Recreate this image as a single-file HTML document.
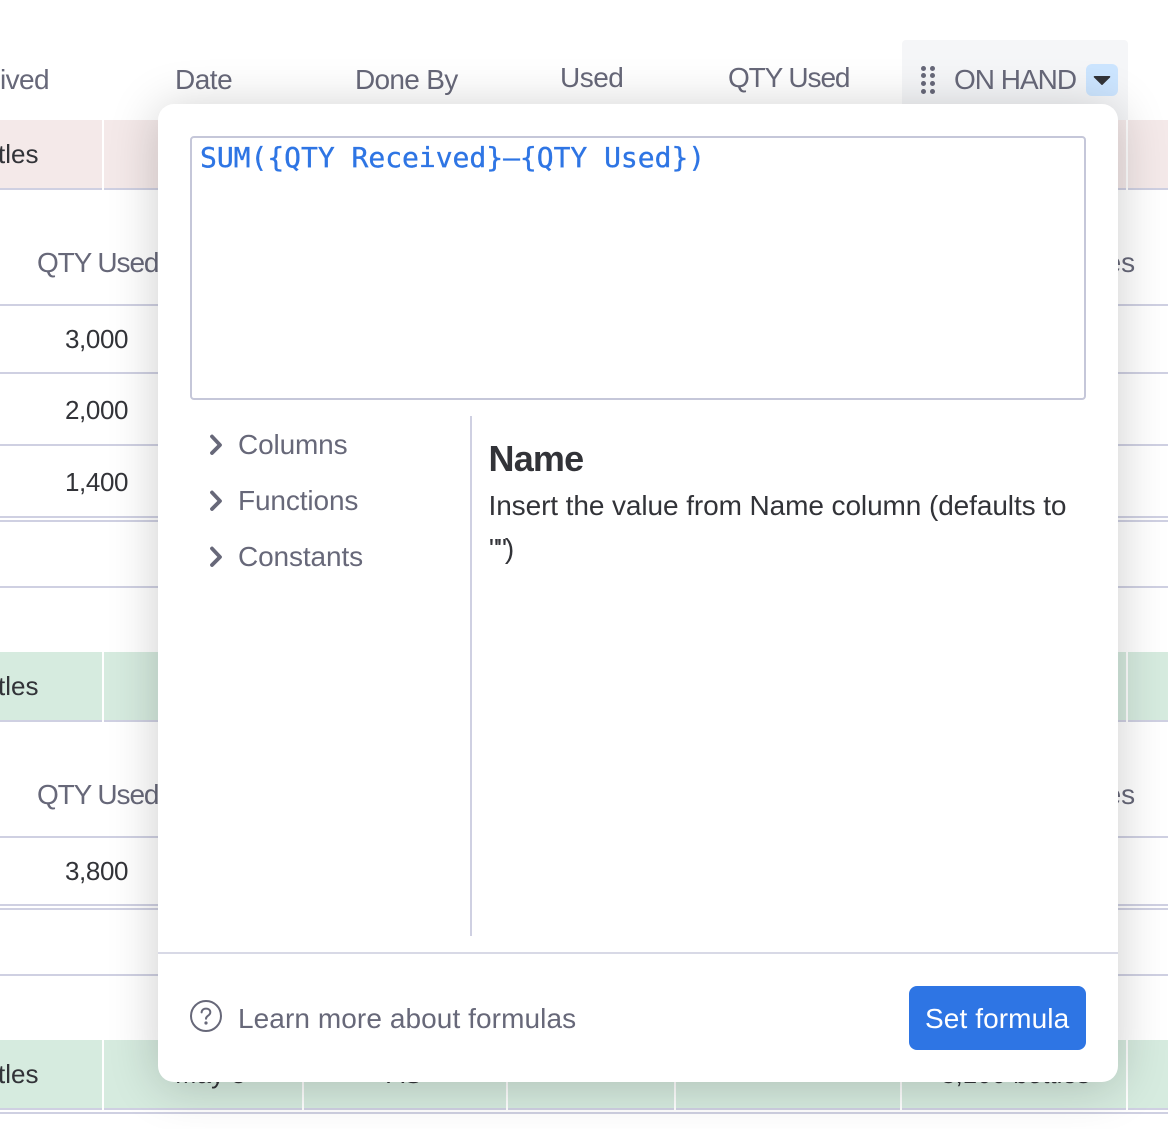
<!DOCTYPE html>
<html><head><meta charset="utf-8">
<style>
html,body{margin:0;padding:0;background:#fff}
#p{position:relative;width:1168px;height:1129px;overflow:hidden;background:#fff;font-family:"Liberation Sans",sans-serif;font-size:28px;color:#676879}
#p div,#p span.t{position:absolute}
.t{white-space:nowrap;line-height:36px;height:36px}
.l{left:0;width:1168px;height:2px;background:#cfd0e2}
.v{width:2px;background:#fff}
.d{color:#323338;font-size:26px}
.n{letter-spacing:-.4px}
.dot{width:5px;height:5px;border-radius:50%;background:#676879}
</style></head><body>
<div id="p">
<span class="t" style="left:0;top:61.5px;letter-spacing:-.6px">ived</span>
<span class="t" style="left:175px;top:61.5px;letter-spacing:-.5px">Date</span>
<span class="t" style="left:355px;top:61.5px;letter-spacing:-.7px">Done By</span>
<span class="t" style="left:560px;top:59.5px;letter-spacing:-.5px">Used</span>
<span class="t" style="left:728px;top:59.5px;letter-spacing:-1.1px">QTY Used</span>
<div style="left:902px;top:40px;width:226px;height:80px;background:#f5f6f8;border-radius:4px 4px 0 0"></div>
<div class="dot" style="left:921px;top:66px"></div><div class="dot" style="left:930px;top:66px"></div>
<div class="dot" style="left:921px;top:73px"></div><div class="dot" style="left:930px;top:73px"></div>
<div class="dot" style="left:921px;top:81px"></div><div class="dot" style="left:930px;top:81px"></div>
<div class="dot" style="left:921px;top:89px"></div><div class="dot" style="left:930px;top:89px"></div>
<span class="t" style="left:954px;top:61.5px;letter-spacing:-1px">ON HAND</span>
<div style="left:1086px;top:64px;width:32px;height:32px;border-radius:6px;background:#cce5ff"></div>
<svg style="position:absolute;left:1093px;top:75px" width="19" height="11" viewBox="0 0 19 11"><path d="M1.5 1.8H16.5L9 9.2Z" fill="#323338" stroke="#323338" stroke-width="1.6" stroke-linejoin="round"/></svg>

<div style="left:0;top:120px;width:1168px;height:68px;background:#f4e9e9"></div>
<div class="l" style="top:188px"></div>
<div class="v" style="left:102px;top:120px;height:70px"></div>
<div class="v" style="left:1126px;top:120px;height:70px"></div>
<span class="t d" style="left:-41px;top:136px">Bottles</span>

<span class="t" style="left:37px;top:245px;letter-spacing:-1.1px">QTY Used</span>
<span class="t" style="left:1062px;top:245px">Notes</span>
<div class="l" style="top:304px"></div>
<span class="t d n" style="left:65px;top:321px">3,000</span>
<div class="l" style="top:372px"></div>
<span class="t d n" style="left:65px;top:392px">2,000</span>
<div class="l" style="top:444px"></div>
<span class="t d n" style="left:65px;top:464px">1,400</span>
<div class="l" style="top:516px"></div>
<div class="l" style="top:520px"></div>
<div class="l" style="top:586px"></div>

<div style="left:0;top:652px;width:1168px;height:68px;background:#d6ebdf"></div>
<div class="l" style="top:720px"></div>
<div class="v" style="left:102px;top:652px;height:70px"></div>
<div class="v" style="left:1126px;top:652px;height:70px"></div>
<span class="t d" style="left:-41px;top:668px">Bottles</span>

<span class="t" style="left:37px;top:777px;letter-spacing:-1.1px">QTY Used</span>
<span class="t" style="left:1062px;top:777px">Notes</span>
<div class="l" style="top:836px"></div>
<span class="t d n" style="left:65px;top:853px">3,800</span>
<div class="l" style="top:904px"></div>
<div class="l" style="top:908px"></div>
<div class="l" style="top:974px"></div>

<div style="left:0;top:1040px;width:1168px;height:68px;background:#d6ebdf"></div>
<div class="l" style="top:1108px"></div>
<div class="l" style="top:1112px"></div>
<div class="v" style="left:102px;top:1040px;height:70px"></div>
<div class="v" style="left:302px;top:1040px;height:70px"></div>
<div class="v" style="left:506px;top:1040px;height:70px"></div>
<div class="v" style="left:674px;top:1040px;height:70px"></div>
<div class="v" style="left:900px;top:1040px;height:70px"></div>
<div class="v" style="left:1126px;top:1040px;height:70px"></div>
<span class="t d" style="left:-41px;top:1056px">Bottles</span>
<span class="t d" style="left:175px;top:1056px">May 5</span>
<span class="t d" style="left:387px;top:1056px">AS</span>
<span class="t d" style="left:941px;top:1056px">3,100 bottles</span>

<div style="left:158px;top:104px;width:960px;height:978px;background:#fff;border-radius:16px;box-shadow:0 4px 50px rgba(0,0,0,.2)">
</div>
<div style="left:190px;top:136px;width:892px;height:260px;border:2px solid #c5c7d9;border-radius:4px"></div>
<span class="t" style="left:200px;top:140px;font-family:'DejaVu Sans Mono',monospace;font-size:28px;letter-spacing:-.02px;color:#2e75e4;-webkit-text-stroke:.35px #2e75e4">SUM({QTY Received}–{QTY Used})</span>

<svg style="position:absolute;left:208px;top:434px" width="16" height="24" viewBox="0 0 16 24"><path d="M4 2.5L12 11L4 19" fill="none" stroke="#676879" stroke-width="3.8" stroke-linecap="round" stroke-linejoin="round"/></svg>
<svg style="position:absolute;left:208px;top:490px" width="16" height="24" viewBox="0 0 16 24"><path d="M4 2.5L12 11L4 19" fill="none" stroke="#676879" stroke-width="3.8" stroke-linecap="round" stroke-linejoin="round"/></svg>
<svg style="position:absolute;left:208px;top:546px" width="16" height="24" viewBox="0 0 16 24"><path d="M4 2.5L12 11L4 19" fill="none" stroke="#676879" stroke-width="3.8" stroke-linecap="round" stroke-linejoin="round"/></svg>
<span class="t" style="left:238px;top:426.5px;letter-spacing:-.15px">Columns</span>
<span class="t" style="left:238px;top:482.5px;letter-spacing:-.12px">Functions</span>
<span class="t" style="left:238px;top:538.5px;letter-spacing:-.12px">Constants</span>

<div style="left:470px;top:416px;width:2px;height:520px;background:#cfd0e2"></div>

<span class="t" style="left:488.5px;top:440.5px;font-size:36px;font-weight:700;letter-spacing:-.8px;color:#323338">Name</span>
<span class="t" style="left:488.5px;top:487.5px;letter-spacing:-.09px;color:#323338">Insert the value from Name column (defaults to</span>
<span class="t" style="left:489px;top:531px;letter-spacing:-2px;color:#323338">"")</span>

<div style="left:158px;top:952px;width:960px;height:2px;background:#d8d9e6"></div>
<svg style="position:absolute;left:189px;top:999px" width="34" height="34" viewBox="0 0 34 34"><circle cx="17" cy="17" r="15" fill="none" stroke="#676879" stroke-width="2"/><path d="M12.6 13.4C12.8 10.9 14.7 9.6 17 9.6C19.4 9.6 21.3 11 21.3 13.2C21.3 15 20.2 15.9 18.9 16.8C17.7 17.6 17 18.3 17 19.8" fill="none" stroke="#676879" stroke-width="2" stroke-linecap="round"/><circle cx="17" cy="24" r="1.6" fill="#676879"/></svg>
<span class="t" style="left:238px;top:1000.5px;letter-spacing:.08px">Learn more about formulas</span>
<div style="left:909px;top:986px;width:177px;height:64px;border-radius:8px;background:#2e75e4"></div>
<span class="t" style="left:925px;top:1000.5px;color:#fff;letter-spacing:.1px">Set formula</span>
</div>
</body></html>
